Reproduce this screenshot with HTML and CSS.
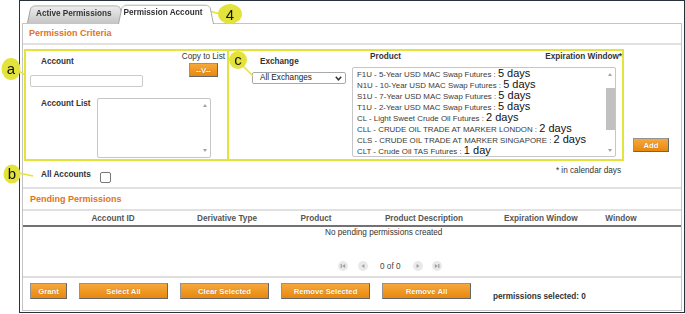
FILE: index.html
```html
<!DOCTYPE html>
<html>
<head>
  <meta charset="utf-8">
  <title>Permission Account</title>
  <link rel="stylesheet" href="styles.css">
</head>
<body>
  <div class="frame">
    <div class="tabs">
      <div class="tab">Active Permissions</div>
      <div class="tab active">Permission Account</div>
    </div>

    <div class="panel">
      <div class="section-head">Permission Criteria</div>

      <div class="criteria">
        <div class="box box-account">
          <div class="account-top">
            <div class="account-field">
              <div class="label account-label">Account</div>
              <div class="input"></div>
            </div>
            <div class="copy">
              <div class="copy-text">Copy to List</div>
              <button class="btn btn-copy">--V--</button>
            </div>
          </div>
          <div class="account-list-row">
            <div class="label list-label">Account List</div>
            <div class="listbox account-list">
              <div class="list-items"></div>
              <div class="scroll">
                <span class="arrow up"></span>
                <span class="arrow down"></span>
              </div>
            </div>
          </div>
        </div>

        <div class="box box-product">
          <div class="exchange-col">
            <div class="label exchange-label">Exchange</div>
            <div class="select">
              <span>All Exchanges</span>
              <svg width="7" height="5" viewBox="0 0 7 5"><polyline points="0.8,0.8 3.5,3.8 6.2,0.8" fill="none" stroke="#333" stroke-width="1.5"/></svg>
            </div>
          </div>
          <div class="product-col">
            <div class="product-head">
              <span>Product</span>
              <span>Expiration Window*</span>
            </div>
            <div class="listbox product-list">
              <div class="list-items">
                <div class="item">F1U - 5-Year USD MAC Swap Futures : <span class="days">5 days</span></div>
                <div class="item">N1U - 10-Year USD MAC Swap Futures : <span class="days">5 days</span></div>
                <div class="item">S1U - 7-Year USD MAC Swap Futures : <span class="days">5 days</span></div>
                <div class="item">T1U - 2-Year USD MAC Swap Futures : <span class="days">5 days</span></div>
                <div class="item">CL - Light Sweet Crude Oil Futures : <span class="days">2 days</span></div>
                <div class="item">CLL - CRUDE OIL TRADE AT MARKER LONDON : <span class="days">2 days</span></div>
                <div class="item">CLS - CRUDE OIL TRADE AT MARKER SINGAPORE : <span class="days">2 days</span></div>
                <div class="item">CLT - Crude Oil TAS Futures : <span class="days">1 day</span></div>
              </div>
              <div class="scroll">
                <span class="arrow up"></span>
                <span class="thumb"></span>
                <span class="arrow down"></span>
              </div>
            </div>
          </div>
        </div>

        <button class="btn btn-add">Add</button>
      </div>

      <div class="all-row">
        <div class="label all-label">All Accounts</div>
        <span class="checkbox"></span>
        <div class="calendar-note">* in calendar days</div>
      </div>

      <div class="section-head pending">Pending Permissions</div>

      <div class="results">
        <div class="grid-head">
          <span></span>
          <span>Account ID</span>
          <span>Derivative Type</span>
          <span>Product</span>
          <span>Product Description</span>
          <span>Expiration Window</span>
          <span>Window</span>
          <span></span>
        </div>
        <div class="empty">No pending permissions created</div>
        <div class="pager">
          <svg class="pg" width="10" height="10" viewBox="0 0 10 10"><circle cx="5" cy="5" r="5" fill="#e9e9e9"/><rect x="2.6" y="3" width="1.2" height="4" fill="#9d9d9d"/><polygon points="7.2,3 4.2,5 7.2,7" fill="#9d9d9d"/></svg>
          <svg class="pg pg-prev" width="10" height="10" viewBox="0 0 10 10"><circle cx="5" cy="5" r="5" fill="#e9e9e9"/><polygon points="6.4,3 3.6,5 6.4,7" fill="#9d9d9d"/></svg>
          <span class="pg-text">0 of 0</span>
          <svg class="pg pg-next" width="10" height="10" viewBox="0 0 10 10"><circle cx="5" cy="5" r="5" fill="#e9e9e9"/><polygon points="3.6,3 6.4,5 3.6,7" fill="#9d9d9d"/></svg>
          <svg class="pg pg-last" width="10" height="10" viewBox="0 0 10 10"><circle cx="5" cy="5" r="5" fill="#e9e9e9"/><polygon points="2.8,3 5.8,5 2.8,7" fill="#9d9d9d"/><rect x="6.2" y="3" width="1.2" height="4" fill="#9d9d9d"/></svg>
        </div>
      </div>

      <div class="actions">
        <button class="btn btn-grant">Grant</button>
        <button class="btn btn-wide">Select All</button>
        <button class="btn btn-wide">Clear Selected</button>
        <button class="btn btn-wide">Remove Selected</button>
        <button class="btn btn-wide">Remove All</button>
        <div class="selected-count">permissions selected: 0</div>
      </div>
    </div>
  </div>

  <!-- callout markers drawn over the screen -->
  <svg class="callouts" width="685" height="314" viewBox="0 0 685 314">
    <g stroke="#e3e33b" stroke-width="1.5">
      <line x1="206" y1="10" x2="220" y2="14"/>
      <line x1="19" y1="71" x2="25" y2="75"/>
      <line x1="19" y1="173" x2="33" y2="176"/>
      <line x1="243" y1="66" x2="253" y2="76"/>
    </g>
    <g fill="#e3e33b">
      <ellipse cx="230" cy="14" rx="12" ry="10"/>
      <ellipse cx="11" cy="69" rx="9.5" ry="11"/>
      <ellipse cx="12" cy="174" rx="8.5" ry="9.5"/>
      <ellipse cx="238" cy="60" rx="9" ry="9"/>
    </g>
    <g class="callout-text" text-anchor="middle">
      <text x="230" y="19.5">4</text>
      <text x="11" y="73.5">a</text>
      <text x="12" y="179">b</text>
      <text x="238" y="64.5">c</text>
    </g>
  </svg>
</body>
</html>
```

FILE: styles.css
```css
* {
  box-sizing: border-box;
}

body {
  margin: 0;
  font-family: 'Liberation Sans', Arial, sans-serif;
  font-size: 8.2px;
  color: #333;
  background: #fff;
}

.frame {
  margin-left: 19px;
  width: 666px;
  height: 313px;
  border: 1px solid #28323c;
  background: #fff;
}

/* tabs */

.tabs {
  display: flex;
  align-items: flex-end;
  height: 22px;
  padding-left: 7px;
}

.tab {
  position: relative;
  z-index: 0;
  height: 19px;
  line-height: 19px;
  padding: 0 12px 0 9px;
  font-weight: bold;
  color: #333;
}

.tab::before {
  content: '';
  position: absolute;
  top: 0;
  left: 0;
  right: 0;
  bottom: 0;
  z-index: -1;
  border: 1px solid #a0a0a0;
  border-bottom: none;
  border-radius: 5px 5px 0 0;
  background: linear-gradient(#ededed, #c6c6c6);
  transform: perspective(12px) rotateX(3deg);
  transform-origin: bottom;
}

.tab.active {
  z-index: 1;
  height: 21px;
  line-height: 20px;
  margin: 0 0 -1px -6px;
  padding: 0 11px 1px 6px;
}

.tab.active::before {
  background: #fff;
  border-color: #a8a8a8;
}

/* panel */

.panel {
  margin: 0 2px;
  height: 288px;
  border: 1px solid #c4c4c4;
}

.section-head {
  height: 21px;
  padding-left: 6px;
  line-height: 19px;
  border-bottom: 2px solid #e1e1e1;
  color: #e27320;
  font-size: 9px;
  font-weight: bold;
}

.section-head.pending {
  height: 24px;
  padding-left: 7px;
  line-height: 20px;
  border-top: 2px solid #e1e1e1;
}

.label {
  font-weight: bold;
  line-height: 12px;
}

/* criteria */

.criteria {
  display: flex;
  height: 112px;
  margin: 4px 0 0 1px;
}

.box {
  height: 112px;
  border: 2px solid #e3e33b;
}

.box-account {
  width: 205px;
  padding: 0 2px 0 4px;
}

.account-top {
  display: flex;
  height: 36px;
}

.account-field {
  padding-top: 5px;
}

.account-label {
  margin-left: 11px;
}

.input {
  width: 113px;
  height: 12px;
  margin-top: 7px;
  border: 1px solid #cacaca;
  border-radius: 2px;
}

.copy {
  display: flex;
  flex-direction: column;
  align-items: center;
  margin-left: auto;
}

.copy-text {
  line-height: 12px;
}

.account-list-row {
  display: flex;
  margin-top: 11px;
}

.list-label {
  width: 56px;
  margin-left: 11px;
}

.listbox {
  display: flex;
  border: 1px solid #c6c6c6;
  border-radius: 2px;
  background: #fff;
  overflow: hidden;
}

.account-list {
  width: 114px;
  height: 60px;
}

.list-items {
  flex: 1;
  overflow: hidden;
}

.scroll {
  display: flex;
  flex-direction: column;
  align-items: center;
  width: 10px;
  padding: 5px 0 5px;
}

.arrow {
  width: 0;
  height: 0;
  border-left: 2.5px solid transparent;
  border-right: 2.5px solid transparent;
}

.arrow.up {
  border-bottom: 3px solid #a3a3a3;
}

.arrow.down {
  margin-top: auto;
  border-top: 3px solid #a3a3a3;
}

.thumb {
  width: 9px;
  height: 42px;
  margin-top: 12px;
  background: #c1c1c1;
}

.box-product {
  display: flex;
  width: 395px;
  border-left: none;
}

.exchange-col {
  padding: 5px 0 0 23px;
}

.exchange-label {
  margin-left: 8px;
}

.select {
  display: flex;
  align-items: center;
  justify-content: space-between;
  width: 94px;
  height: 12px;
  margin-top: 4px;
  padding: 0 3px 0 7px;
  border: 1px solid #a9a9a9;
  border-radius: 2px;
  line-height: 10px;
  color: #222;
}

.product-col {
  flex: 1;
  margin-left: 6px;
}

.product-head {
  display: flex;
  justify-content: space-between;
  padding-left: 18px;
  line-height: 12px;
  font-weight: bold;
}

.product-list {
  width: 264px;
  height: 90px;
  margin-top: 4px;
}

.product-list .list-items {
  padding-left: 4px;
}

.product-list .scroll {
  padding: 5px 0 4px;
}

.item {
  height: 11px;
  line-height: 11px;
  font-size: 7.9px;
  color: #3a3a3a;
  white-space: nowrap;
}

.days {
  font-size: 11px;
  line-height: 11px;
  color: #111;
}

.btn {
  padding: 0;
  border: 1px solid #939393;
  border-right-color: #666;
  border-bottom-color: #666;
  background: linear-gradient(#f6a83c, #e8880e);
  color: #fff;
  font: bold 7.7px 'Liberation Sans', Arial, sans-serif;
  text-shadow: 0 0 1px #b86400;
}

.btn-copy {
  width: 29px;
  height: 14px;
}

.btn-add {
  align-self: flex-end;
  width: 36px;
  height: 14px;
  margin: 0 0 9px 9px;
}

/* all accounts row */

.all-row {
  display: flex;
  align-items: flex-start;
  height: 26px;
  padding-left: 18px;
}

.all-label {
  margin-top: 8px;
}

.checkbox {
  width: 11px;
  height: 11px;
  margin: 11px 0 0 9px;
  border: 1px solid #777;
  border-radius: 2px;
}

.calendar-note {
  margin: 4px 60px 0 auto;
  line-height: 12px;
}

/* pending results */

.results {
  display: flex;
  flex-direction: column;
  height: 65px;
}

.grid-head {
  display: grid;
  grid-template-columns: 37px 106px 122px 56px 160px 66px 102px 9px;
  height: 16px;
  padding-top: 1px;
  line-height: 13px;
  border-bottom: 2px solid #727272;
  font-weight: bold;
  color: #555;
  text-align: center;
  white-space: nowrap;
}

.empty {
  padding-left: 302px;
  line-height: 11px;
}

.pager {
  display: flex;
  align-items: center;
  height: 12px;
  margin: auto 0 4px;
  padding-left: 315px;
  color: #444;
}

.pg-prev {
  margin-left: 10px;
}

.pg-text {
  margin-left: 12px;
}

.pg-next {
  margin-left: 12px;
}

.pg-last {
  margin-left: 9px;
}

/* actions */

.actions {
  display: flex;
  align-items: flex-start;
  gap: 12px;
  height: 34px;
  padding: 5px 0 0 7px;
  border-top: 2px solid #dedede;
}

.actions .btn {
  height: 16px;
}

.btn-grant {
  width: 37px;
}

.btn-wide {
  width: 89px;
}

.selected-count {
  margin: 8px 0 0 10px;
  line-height: 12px;
  font-weight: bold;
}

/* callouts */

.callouts {
  position: absolute;
  top: 0;
  left: 0;
  pointer-events: none;
}

.callout-text {
  font-family: 'Liberation Sans', Arial, sans-serif;
  font-size: 15px;
  fill: #111;
}
```
